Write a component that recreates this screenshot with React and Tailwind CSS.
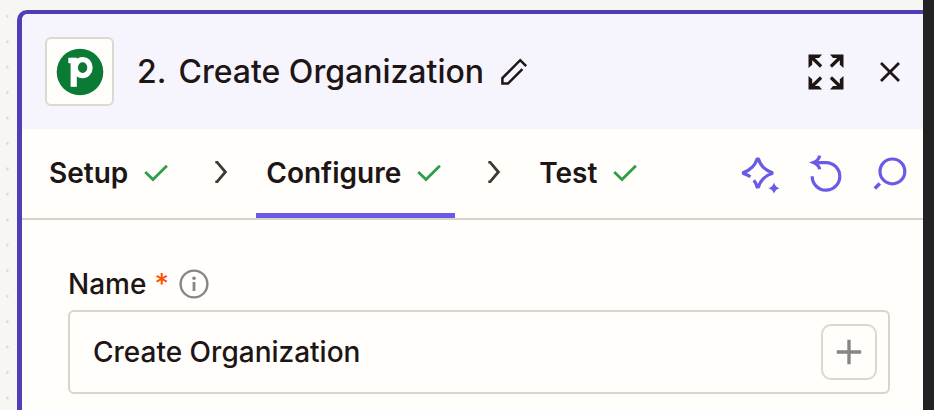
import { useState } from 'react';

const TABS = ['Setup', 'Configure', 'Test'];

function CheckIcon() {
  return (
    <svg viewBox="0 0 24 18" className="h-[18px] w-6 shrink-0" fill="none" stroke="#2f9e4b" strokeWidth="2.8" aria-hidden="true">
      <path d="M1.2 8 9 15.6 22.9 1.8" />
    </svg>
  );
}

function ChevronIcon() {
  return (
    <svg viewBox="0 0 14 22" className="h-[22px] w-3.5 shrink-0" fill="none" stroke="#413735" strokeWidth="2.8" aria-hidden="true">
      <path d="M1.3 1.2H3L11.4 11 3 20.8H1.3" />
    </svg>
  );
}

function PipedriveLogo() {
  return (
    <svg viewBox="0 0 48 48" className="h-12 w-12" aria-hidden="true">
      <circle cx="24" cy="24" r="23.3" fill="#0a7a35" />
      <rect x="12.3" y="9.8" width="8" height="5.4" fill="#fff" />
      <rect x="14.6" y="9.8" width="6.2" height="29" fill="#fff" />
      <ellipse cx="26.6" cy="19.6" rx="7.4" ry="8" fill="none" stroke="#fff" strokeWidth="5.4" />
    </svg>
  );
}

function PencilIcon() {
  return (
    <svg viewBox="0 0 28 28" className="h-7 w-7" fill="none" stroke="#201515" strokeWidth="2.5" aria-hidden="true">
      <path d="M26.2 8.2 20.2 2.2 2.4 20V25.6H8L22.4 11.2" />
    </svg>
  );
}

function ExpandIcon() {
  return (
    <svg viewBox="0 0 36 36" className="h-9 w-9" aria-hidden="true">
      <g fill="#201515" stroke="none">
        <path d="M.5.5H14L11 4H6.9L14.2 11.3 12 13.7 4.2 6.2V10.8L.5 14Z" />
        <path d="M35.5.5H22L25 4H29.1L21.8 11.3 24 13.7 31.8 6.2V10.8L35.5 14Z" />
        <path d="M.5 35.5H14L11 32H6.9L14.2 24.7 12 22.3 4.2 29.8V25.2L.5 22Z" />
        <path d="M35.5 35.5H22L25 32H29.1L21.8 24.7 24 22.3 31.8 29.8V25.2L35.5 22Z" />
      </g>
    </svg>
  );
}

function CloseIcon() {
  return (
    <svg viewBox="0 0 20 20" className="h-5 w-5" fill="none" stroke="#201515" strokeWidth="2.8" aria-hidden="true">
      <path d="M1 1 19 19M19 1 1 19" />
    </svg>
  );
}

function SparkleIcon() {
  return (
    <svg viewBox="0 0 40 40" className="h-10 w-10" fill="none" stroke="#695be8" strokeWidth="3.2" aria-hidden="true">
      <path d="M10.4 22.8C8.4 21.4 6.2 20.5 3.4 19.6V18.4C8.8 16.6 14.6 13.4 17.1 5H18.5C21 13.4 26.4 16.6 32 18.4V19.6C26.4 21.4 21 24.8 18.5 33H17.1C16.4 30.2 15.4 28.2 13.8 26.2" strokeLinejoin="round" />
      <path d="M34 28.2C35 31.6 36 32.8 39.6 34.2 36 35.6 35 36.8 34 39.8 33 36.8 32 35.6 28.4 34.2 32 32.8 33 31.6 34 28.2Z" fill="#695be8" stroke="none" />
    </svg>
  );
}

function UndoIcon() {
  return (
    <svg viewBox="0 0 36 40" className="h-10 w-9" fill="none" stroke="#695be8" strokeWidth="3.2" aria-hidden="true">
      <path d="M4.2 22.2A13.8 13.8 0 1 0 18 8.6H6.5" />
      <path d="M11.8 1.6C10.8 5 9 7.2 5.4 8.6 9 10 10.8 11.8 11.8 15.2" />
    </svg>
  );
}

function SearchIcon() {
  return (
    <svg viewBox="0 0 36 36" className="h-9 w-9" fill="none" stroke="#695be8" strokeWidth="3.2" aria-hidden="true">
      <circle cx="20.4" cy="15.4" r="12.4" />
      <path d="M7.8 27.6 2.8 32.6" strokeWidth="3.6" />
    </svg>
  );
}

function InfoIcon() {
  return (
    <svg viewBox="0 0 30 30" className="h-[30px] w-[30px]" fill="none" stroke="#8a8582" strokeWidth="2.4" aria-hidden="true">
      <circle cx="15" cy="15" r="13.4" />
      <path d="M15 13V22" strokeWidth="2.8" />
      <circle cx="15" cy="9.2" r="1.8" fill="#8a8582" stroke="none" />
    </svg>
  );
}

function PlusIcon() {
  return (
    <svg viewBox="0 0 26 26" className="h-[26px] w-[26px]" fill="none" stroke="#8a8582" strokeWidth="3.4" aria-hidden="true">
      <path d="M13 .8V25.2M.8 13H25.2" />
    </svg>
  );
}

function CanvasDots() {
  return (
    <svg className="h-full w-full" aria-hidden="true">
      <defs>
        <pattern id="dots" width="26" height="25.45" y="3.5" patternUnits="userSpaceOnUse">
          <circle cx="7.3" cy="12.7" r="1.4" fill="#dddad5" />
        </pattern>
      </defs>
      <rect width="100%" height="100%" fill="url(#dots)" />
    </svg>
  );
}

export default function App() {
  const [activeTab, setActiveTab] = useState('Configure');
  const [name, setName] = useState('Create Organization');

  return (
    <div className="flex min-h-screen bg-[#f7f6f3] font-['Inter',sans-serif] text-[#201515]">
      <div className="w-[17px] shrink-0">
        <CanvasDots />
      </div>

      <main className="mt-2.5 min-w-0 flex-1 rounded-tl-[10px] border-t-4 border-l-[5px] border-[#503eb9] bg-[#fffefb]">
        <header className="flex items-center rounded-tl-md bg-[#f6f5fd] py-[23px] pr-[21px] pl-[23px]">
          <div className="flex h-[69px] w-[69px] shrink-0 items-center justify-center rounded-md border-2 border-[#ddd8d0] bg-[#fffefb]">
            <PipedriveLogo />
          </div>
          <h1 className="ml-[23px] flex gap-3 text-[32px] leading-10 font-medium whitespace-nowrap">
            <span>2.</span>
            <span>Create Organization</span>
          </h1>
          <button type="button" aria-label="Rename step" className="ml-4">
            <PencilIcon />
          </button>
          <div className="ml-auto flex items-center gap-9">
            <button type="button" aria-label="Expand panel">
              <ExpandIcon />
            </button>
            <button type="button" aria-label="Close panel" className="mr-0.5">
              <CloseIcon />
            </button>
          </div>
        </header>

        <div className="flex h-[91px] items-stretch border-b-2 border-[#d8d2c9] pr-[15px] pl-[17px]">
          <nav className="flex items-stretch" aria-label="Step sections">
            {TABS.map((tab, index) => (
              <div key={tab} className="flex items-center">
                {index > 0 && (
                  <span className="mr-7 mb-1 ml-8">
                    <ChevronIcon />
                  </span>
                )}
                <button
                  type="button"
                  onClick={() => setActiveTab(tab)}
                  aria-current={tab === activeTab ? 'step' : undefined}
                  className={`flex h-full items-center gap-4 border-b-[5px] pt-1 pr-3.5 pl-2.5 text-[28px] leading-8 font-semibold ${tab === activeTab ? 'border-[#695be8]' : 'border-transparent'}`}
                >
                  {tab}
                  <CheckIcon />
                </button>
              </div>
            ))}
          </nav>
          <div className="ml-auto flex items-center gap-7">
            <button type="button" aria-label="Ask AI">
              <SparkleIcon />
            </button>
            <button type="button" aria-label="Reset">
              <UndoIcon />
            </button>
            <button type="button" aria-label="Search">
              <SearchIcon />
            </button>
          </div>
        </div>

        <section className="pt-12 pr-[33px] pl-[46px]">
          <div className="flex items-center">
            <label htmlFor="name" className="flex gap-2 text-[28px] leading-8 font-medium">
              Name <span className="text-[#ff4f00]">*</span>
            </label>
            <button type="button" aria-label="About this field" className="ml-2.5">
              <InfoIcon />
            </button>
          </div>
          <div className="mt-2.5 flex h-[84px] items-center rounded-md border-2 border-[#d8d5c9] pr-[11px] pl-[23px]">
            <input
              id="name"
              type="text"
              value={name}
              onChange={(event) => setName(event.target.value)}
              className="min-w-0 flex-1 bg-transparent text-[28px] leading-8 font-medium outline-none"
            />
            <button
              type="button"
              aria-label="Insert data"
              className="flex h-14 w-14 items-center justify-center rounded-[10px] border-2 border-[#ddd8ce]"
            >
              <PlusIcon />
            </button>
          </div>
        </section>
      </main>

      <div className="w-[11px] shrink-0 bg-[#222]" />
    </div>
  );
}
